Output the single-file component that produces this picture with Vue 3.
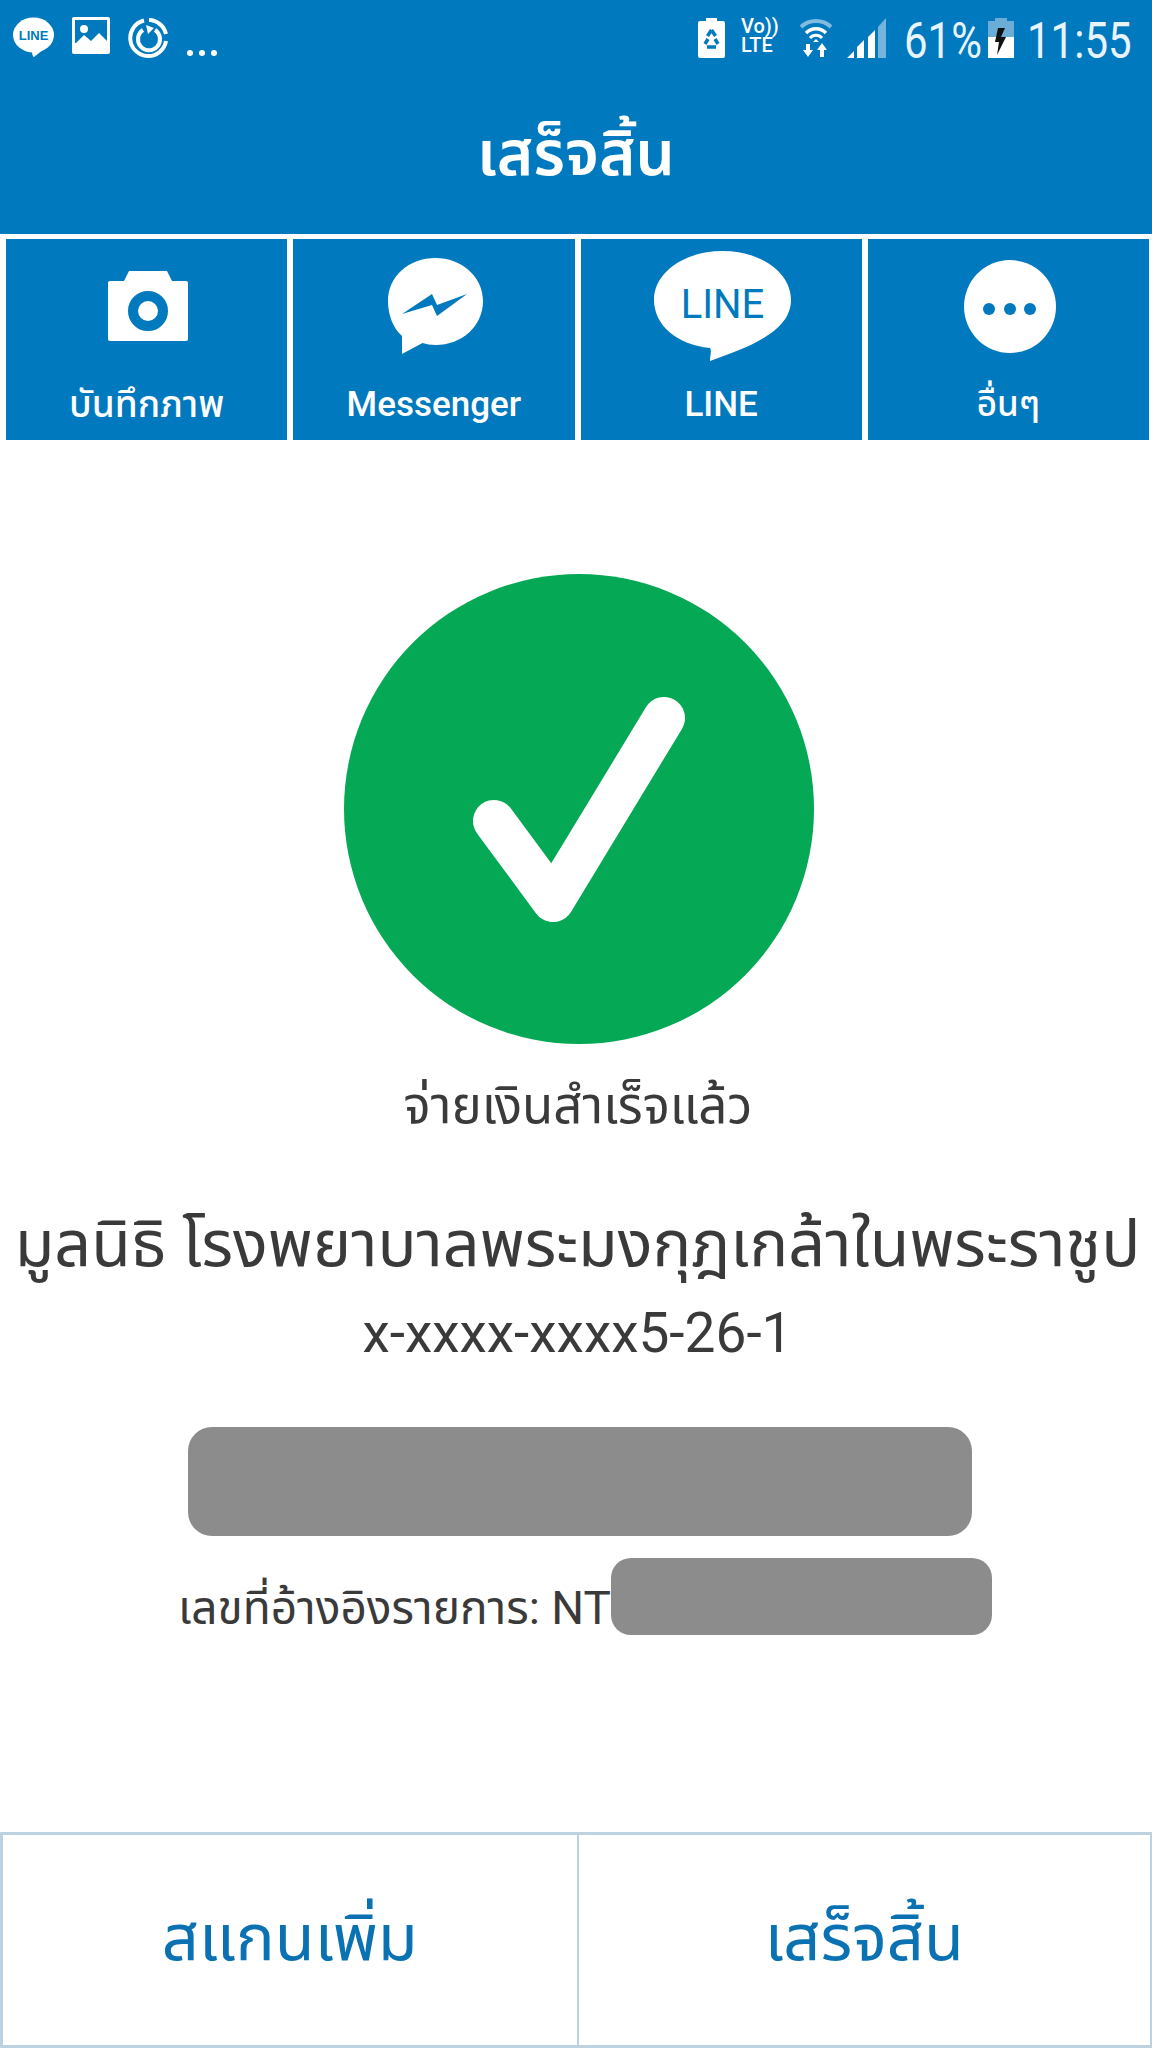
<template>
  <div class="page">
    <header class="top">
      <div class="status">
        <div class="status-left">
          <svg width="41" height="41" viewBox="0 0 41 41">
            <ellipse cx="20.5" cy="18" rx="20.500" ry="17.500" fill="#fff" />
            <path d="M16 33h6c0 0 0 0 0 0l9-1-10 8c-2-1-2-5-2-7z" fill="#fff" />
            <text x="20.5" y="23" text-anchor="middle" class="line-small">LINE</text>
          </svg>
          <svg width="38" height="37" viewBox="0 0 38 37">
            <rect width="38" height="37" rx="2" fill="#fff" />
            <rect x="3" y="3" width="32" height="23" fill="#0079be" />
            <circle cx="12" cy="12" r="4" fill="#fff" />
            <path d="M3 27l9-9 7 6 8-8 8 8v9H3z" fill="#fff" />
          </svg>
          <svg width="41" height="42" viewBox="0 0 41 42">
            <path d="M21 3a18 18 0 0 1 17 14" fill="none" stroke="#fff" stroke-width="4" />
            <path d="M38 24A18 18 0 1 1 16 3.500" fill="none" stroke="#fff" stroke-width="4" />
            <path d="M15 13a11 11 0 1 0 12 0" fill="none" stroke="#fff" stroke-width="4" />
            <path d="M18 8l8 3-6 6z" fill="#fff" />
          </svg>
          <div class="dots"><i></i><i></i><i></i></div>
        </div>
        <div class="status-right">
          <svg class="ic-recycle" width="27" height="40" viewBox="0 0 27 40">
            <path d="M8 0h11v3h6a2 2 0 0 1 2 2v33a2 2 0 0 1-2 2H2a2 2 0 0 1-2-2V5a2 2 0 0 1 2-2h6z" fill="#fff" />
            <path d="M13.500 12l4 6M9.500 18l4-6M7 26l3-5M20 26l-3-5M9 29h9" stroke="#0079be" stroke-width="3.500" fill="none" />
          </svg>
          <div class="volte"><span>Vo))</span><span>LTE</span></div>
          <svg class="ic-wifi" width="34" height="40" viewBox="0 0 34 40">
            <path d="M2 9a22 22 0 0 1 30 0" fill="none" stroke="#fff" stroke-opacity=".5" stroke-width="4" />
            <path d="M7 15a14 14 0 0 1 20 0" fill="none" stroke="#fff" stroke-width="3.500" />
            <path d="M11 20a8 8 0 0 1 12 0" fill="none" stroke="#fff" stroke-width="3" />
            <path d="M17 21l3 3h-6zM7 26h4v6h3l-5 7-5-7h3zM25 39h-4v-7h-3l5-7 5 7h-3z" fill="#fff" />
          </svg>
          <svg class="ic-signal" width="39" height="40" viewBox="0 0 39 40">
            <path d="M0 40l7-7v7zM10 40V29l7-7v18zM21 40V19l7-7v28z" fill="#fff" />
            <path d="M31 40V9l8-9v40z" fill="#fff" fill-opacity=".45" />
          </svg>
          <span class="pct">61%</span>
          <svg class="ic-batt" width="26" height="40" viewBox="0 0 26 40">
            <path d="M7 0h12v3h7v37H0V3h7z" fill="#fff" />
            <path d="M7 0h12v3h7v16H0V3h7z" fill="#6badd6" />
            <path d="M17 10h-7l-3 14h4l-2 13 9-18h-5z" fill="#111" />
          </svg>
          <span class="clock">11:55</span>
        </div>
      </div>
      <h1 class="title">เสร็จสิ้น</h1>
    </header>

    <nav class="shares">
      <a class="tile">
        <div class="tile-ic">
          <svg width="80" height="70" viewBox="0 0 80 70">
            <path d="M0 12a2 2 0 0 1 2-2h14l5-10h38l5 10h14a2 2 0 0 1 2 2v56a2 2 0 0 1-2 2H2a2 2 0 0 1-2-2z" fill="#fff" />
            <circle cx="40" cy="40" r="15" fill="none" stroke="#0079be" stroke-width="10" />
          </svg>
        </div>
        <span class="thai">บันทึกภาพ</span>
      </a>
      <a class="tile">
        <div class="tile-ic">
          <svg width="95" height="96" viewBox="0 0 95 96">
            <path d="M47.500 0C73 0 95 18 95 43S74 87 47.500 87c-5 0-9-1-13-2L14 96V78C5 70 0 57 0 43 0 18 21 0 47.500 0z" fill="#fff" />
            <path d="M14 56L44 36 49 47 79 36 49 58 44 47z" fill="#0079be" />
          </svg>
        </div>
        <span>Messenger</span>
      </a>
      <a class="tile">
        <div class="tile-ic">
          <svg width="137" height="110" viewBox="0 0 137 110">
            <path d="M68.500 0C106 0 137 21 137 49c0 30-38 46-81 61 0-6 2-10 0-13C23 94 0 74 0 49 0 21 31 0 68.500 0z" fill="#fff" />
            <text x="68.500" y="67" text-anchor="middle" class="line-big">LINE</text>
          </svg>
        </div>
        <span>LINE</span>
      </a>
      <a class="tile">
        <div class="tile-ic">
          <svg width="92" height="93" viewBox="0 0 92 93">
            <ellipse cx="46" cy="46.500" rx="46" ry="46.500" fill="#fff" />
            <circle cx="25" cy="49" r="6" fill="#0079be" />
            <circle cx="46" cy="49" r="6" fill="#0079be" />
            <circle cx="66" cy="49" r="6" fill="#0079be" />
          </svg>
        </div>
        <span>อื่นๆ</span>
      </a>
    </nav>

    <main class="body">
      <svg class="check" width="470" height="470" viewBox="0 0 470 470">
        <circle cx="235" cy="235" r="235" fill="#05a854" />
        <path d="M150 247l59 80 111-183" fill="none" stroke="#fff" stroke-width="42" stroke-linecap="round" stroke-linejoin="round" />
      </svg>
      <p class="done">จ่ายเงินสำเร็จแล้ว</p>
      <p class="name">มูลนิธิ โรงพยาบาลพระมงกุฎเกล้าในพระราชูป</p>
      <p class="acct">x-xxxx-xxxx5-26-1</p>
      <div class="mask-a"></div>
      <div class="ref">
        <span>เลขที่อ้างอิงรายการ: NT</span>
        <div class="mask-b"></div>
      </div>
    </main>

    <footer class="actions">
      <button class="act">สแกนเพิ่ม</button>
      <button class="act">เสร็จสิ้น</button>
    </footer>
  </div>
</template>

<script setup>
</script>

<style>
html,
body {
  margin: 0;
  background: #fff;
}
</style>

<style scoped>
.page {
  width: 1152px;
  height: 2048px;
  display: flex;
  flex-direction: column;
  background: #fff;
  font-family: Roboto, "Noto Sans", "Noto Sans Thai", sans-serif;
  color: #3a3a3a;
  overflow: hidden;
}

.top {
  height: 234px;
  background: #0079be;
  color: #fff;
  flex: none;
}

.status {
  height: 76px;
  display: flex;
  justify-content: space-between;
  align-items: flex-start;
  padding: 17px 19px 0 13px;
  box-sizing: border-box;
}

.status-left {
  display: flex;
  align-items: flex-start;
  gap: 18px;
}

.dots {
  display: flex;
  gap: 6px;
  margin-top: 33px;
}

.dots i {
  width: 6px;
  height: 6px;
  border-radius: 50%;
  background: #fff;
}

.status-right {
  display: flex;
  align-items: flex-start;
}

.line-small {
  font: 700 13px "Liberation Sans", sans-serif;
  fill: #0079be;
}

.line-big {
  font: 400 40px Roboto, sans-serif;
  fill: #0079be;
}

.volte {
  width: 37px;
  margin-left: 16px;
  font: 500 20px/19px Roboto, sans-serif;
  display: flex;
  flex-direction: column;
  white-space: nowrap;
}

.ic-recycle {
  margin-top: 1px;
}

.ic-wifi {
  margin-left: 21px;
  margin-top: 1px;
}

.ic-signal {
  margin-left: 14px;
  margin-top: 1px;
}

.pct,
.clock {
  font: 400 50px/48px Roboto, sans-serif;
  color: #e8f4fb;
  white-space: nowrap;
  transform: scaleX(0.84);
  transform-origin: left center;
}

.pct {
  width: 75px;
  margin-left: 18px;
}

.clock {
  width: 106px;
  margin-left: 13px;
}

.ic-batt {
  margin-left: 9px;
  margin-top: 1px;
}

.title {
  margin: 0;
  text-align: center;
  font-size: 62px;
  font-weight: 600;
  line-height: 80px;
  padding-top: 38px;
}

.shares {
  margin-top: 5px;
  padding: 0 3px 0 6px;
  display: grid;
  grid-template-columns: repeat(4, 1fr);
  gap: 6px;
  flex: none;
}

.tile {
  height: 201px;
  background: #0079be;
  color: #fff;
  display: flex;
  flex-direction: column;
  align-items: center;
  font-size: 35px;
  font-weight: 500;
}

.tile-ic {
  height: 134px;
  padding-left: 3px;
  display: flex;
  align-items: center;
  justify-content: center;
}

.tile span {
  line-height: 64px;
}

.tile .thai {
  font-size: 37px;
}

.body {
  flex: 1;
  display: flex;
  flex-direction: column;
  align-items: center;
}

.check {
  margin-top: 134px;
  margin-left: 6px;
}

.done,
.name,
.acct {
  margin: 0;
  white-space: nowrap;
}

.done {
  font-size: 51px;
  line-height: 64px;
  margin-top: 30px;
  margin-left: 4px;
}

.name {
  font-size: 64.7px;
  line-height: 76px;
  margin-top: 68px;
  margin-left: 3px;
}

.acct {
  font-size: 55px;
  line-height: 60px;
  margin-top: 21px;
  margin-left: 3px;
}

.mask-a {
  width: 784px;
  height: 109px;
  margin-top: 64px;
  margin-left: 8px;
  border-radius: 24px;
  background: #8c8c8c;
}

.ref {
  display: flex;
  align-items: flex-start;
  margin-top: 22px;
  margin-left: 18px;
  font-size: 46px;
}

.ref span {
  line-height: 60px;
  margin-top: 20px;
  white-space: nowrap;
}

.mask-b {
  width: 381px;
  height: 77px;
  border-radius: 20px;
  background: #8c8c8c;
}

.actions {
  height: 216px;
  flex: none;
  display: grid;
  grid-template-columns: 1fr 1fr;
  box-sizing: border-box;
  border: 3px solid #bdd2e0;
  border-right-width: 2px;
}

.act {
  background: #fff;
  border: 0;
  font: inherit;
  font-size: 65px;
  color: #0a72b2;
  padding: 0;
}

.act + .act {
  border-left: 2px solid #bdd2e0;
}
</style>
